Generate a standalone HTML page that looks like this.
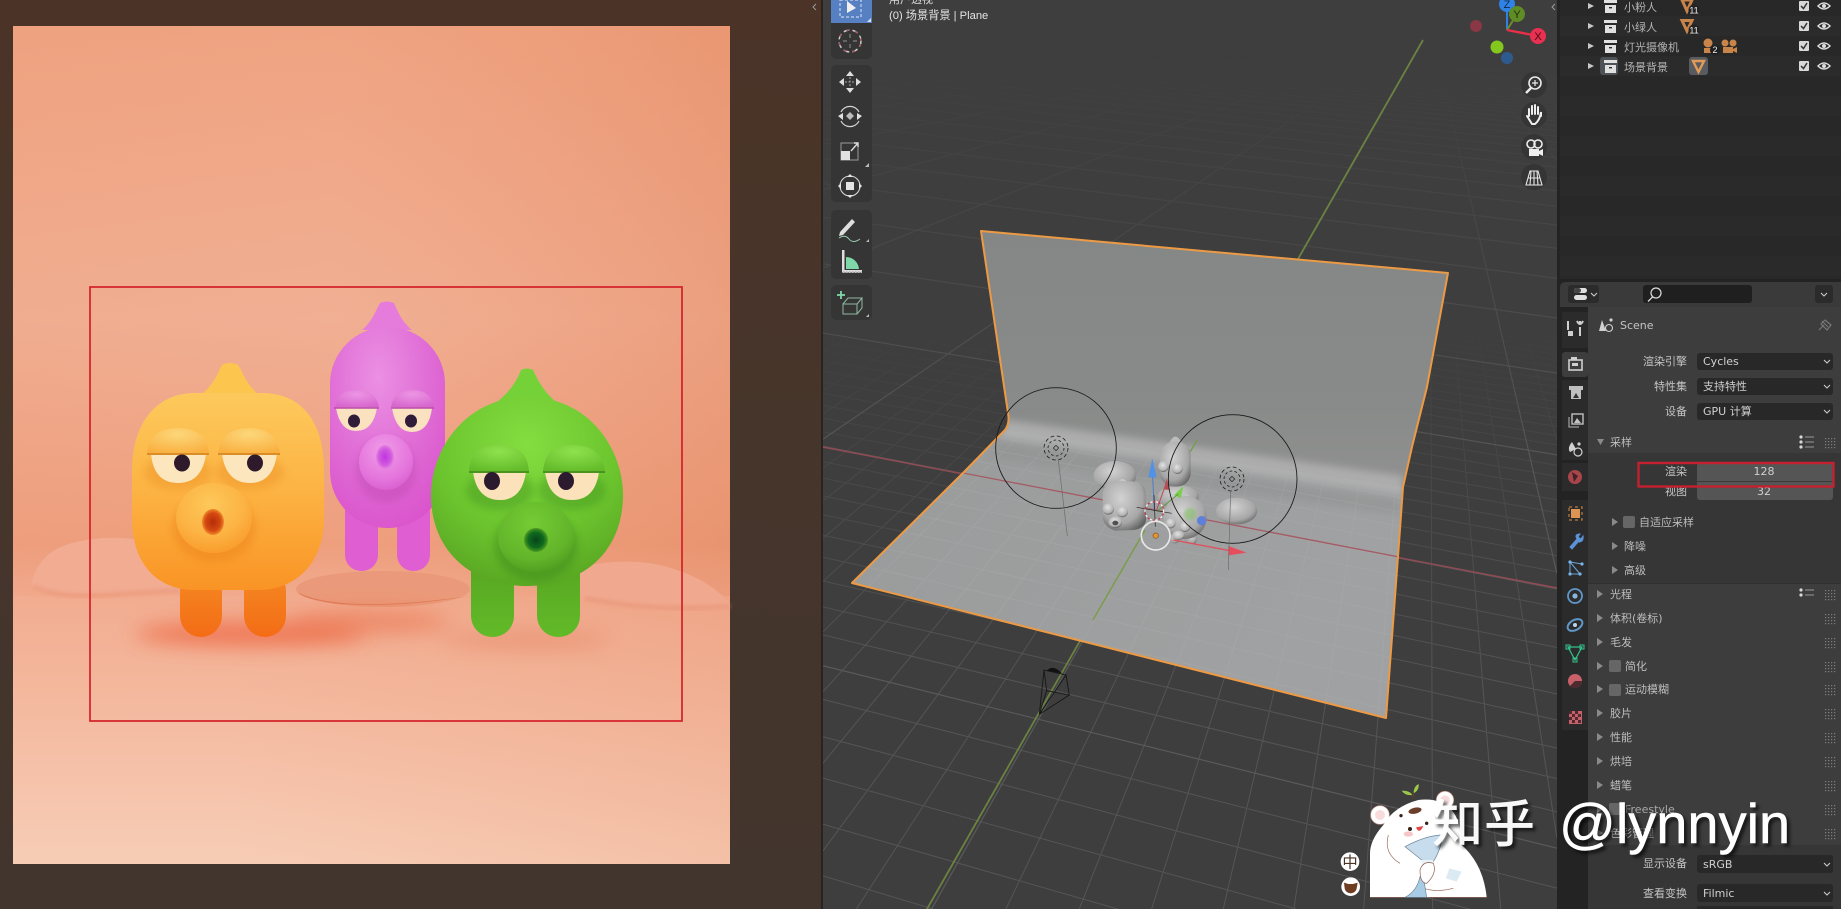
<!DOCTYPE html>
<html lang="zh">
<head>
<meta charset="utf-8">
<title>Blender</title>
<style>
html,body{margin:0;padding:0;background:#463429;width:1841px;height:909px;overflow:hidden}
svg{position:absolute;left:0;top:0;display:block;overflow:hidden}
text{font-family:"DejaVu Sans","Noto Sans CJK SC",sans-serif;font-size:11px;fill:#c4c4c4}
.r{text-anchor:end}
.v{fill:#d0d0d0}
.h{fill:#bdbdbd}
.o{fill:#b4b4b4;font-size:11px}
.l{font-family:"Liberation Sans","Noto Sans CJK SC",sans-serif}
</style>
</head>
<body>
<svg width="1841" height="909" viewBox="0 0 1841 909" xmlns="http://www.w3.org/2000/svg">
<defs>
<linearGradient id="pageBg" x1="0" y1="0" x2="0" y2="1"><stop offset="0" stop-color="#4b3327"/><stop offset=".5" stop-color="#46352b"/><stop offset="1" stop-color="#42352d"/></linearGradient>
<linearGradient id="bgV" x1="0" y1="0" x2="0" y2="1"><stop offset="0" stop-color="#efa381"/><stop offset=".35" stop-color="#f1af93"/><stop offset=".62" stop-color="#ee9f7e"/><stop offset=".69" stop-color="#f2ad91"/><stop offset="1" stop-color="#f7cdb6"/></linearGradient>
<linearGradient id="bgH" x1="0" y1="0" x2="1" y2="0"><stop offset="0" stop-color="#e88a62" stop-opacity=".06"/><stop offset=".45" stop-color="#e88a62" stop-opacity="0"/><stop offset="1" stop-color="#dd7a50" stop-opacity=".3"/></linearGradient>
<linearGradient id="bgH2" x1="0" y1="0" x2="1" y2="0"><stop offset=".3" stop-color="#e88a62" stop-opacity="0"/><stop offset="1" stop-color="#e07f58" stop-opacity=".16"/></linearGradient>
<linearGradient id="org" x1="0" y1="0" x2="0" y2="1"><stop offset="0" stop-color="#fdc95c"/><stop offset=".5" stop-color="#fcb343"/><stop offset="1" stop-color="#f99425"/></linearGradient>
<linearGradient id="orgL" x1="0" y1="0" x2="0" y2="1"><stop offset="0" stop-color="#f58a22"/><stop offset="1" stop-color="#f46c16"/></linearGradient>
<radialGradient id="orgM" cx=".45" cy=".3" r=".75"><stop offset="0" stop-color="#fdc85a"/><stop offset=".6" stop-color="#fcb343"/><stop offset="1" stop-color="#f8992a"/></radialGradient>
<radialGradient id="orgLid" cx=".5" cy=".25" r=".8"><stop offset="0" stop-color="#fdd77a"/><stop offset="1" stop-color="#f9b040"/></radialGradient>
<radialGradient id="pnk" cx=".42" cy=".25" r=".85"><stop offset="0" stop-color="#eb90e3"/><stop offset=".5" stop-color="#e06ed6"/><stop offset="1" stop-color="#d950ca"/></radialGradient>
<radialGradient id="pnkM" cx=".45" cy=".3" r=".75"><stop offset="0" stop-color="#f09be8"/><stop offset=".7" stop-color="#e474dc"/><stop offset="1" stop-color="#d75ccd"/></radialGradient>
<radialGradient id="pnkLid" cx=".5" cy=".25" r=".8"><stop offset="0" stop-color="#ec95e4"/><stop offset="1" stop-color="#d765cd"/></radialGradient>
<radialGradient id="grn" cx=".5" cy=".25" r=".85"><stop offset="0" stop-color="#84dd40"/><stop offset=".55" stop-color="#6cc52e"/><stop offset="1" stop-color="#559e20"/></radialGradient>
<radialGradient id="grnM" cx=".45" cy=".3" r=".75"><stop offset="0" stop-color="#74cc34"/><stop offset=".7" stop-color="#62b42a"/><stop offset="1" stop-color="#4f9a1f"/></radialGradient>
<radialGradient id="grnLid" cx=".5" cy=".25" r=".8"><stop offset="0" stop-color="#8ee24c"/><stop offset="1" stop-color="#63bb2a"/></radialGradient>
<linearGradient id="grnL" x1="0" y1="0" x2="0" y2="1"><stop offset="0" stop-color="#55a320"/><stop offset="1" stop-color="#62ba28"/></linearGradient>
<radialGradient id="holeO" cx=".5" cy=".5" r=".5"><stop offset="0" stop-color="#b52c08"/><stop offset=".7" stop-color="#d44a12"/><stop offset="1" stop-color="#ef8a2a"/></radialGradient>
<radialGradient id="holeP" cx=".5" cy=".5" r=".5"><stop offset="0" stop-color="#bf35e0"/><stop offset=".7" stop-color="#d25ae0"/><stop offset="1" stop-color="#e483de"/></radialGradient>
<radialGradient id="holeG" cx=".5" cy=".5" r=".5"><stop offset="0" stop-color="#07451a"/><stop offset=".65" stop-color="#0f6a1e"/><stop offset="1" stop-color="#4e9c22"/></radialGradient>
<filter id="b1" x="-30%" y="-30%" width="160%" height="160%"><feGaussianBlur stdDeviation="1"/></filter>
<filter id="b2" x="-30%" y="-30%" width="160%" height="160%"><feGaussianBlur stdDeviation="2"/></filter>
<filter id="b4" x="-30%" y="-30%" width="160%" height="160%"><feGaussianBlur stdDeviation="4"/></filter>
<filter id="b10" x="-40%" y="-120%" width="180%" height="340%"><feGaussianBlur stdDeviation="10"/></filter>
<clipPath id="vp"><rect x="823" y="0" width="734" height="909"/></clipPath>
<clipPath id="floorC"><path d="M852 583L963 473L1005 430L1403 487L1399 543L1386 718Z"/></clipPath>
<clipPath id="planeC"><path d="M981 231L1448 273L1427 387L1412 447L1403 487L1399 543L1386 718L852 583L963 473L1005 430Q1010 423 1008 413Z"/></clipPath>
<linearGradient id="wallG" x1="0" y1="231" x2="0" y2="480" gradientUnits="userSpaceOnUse"><stop offset="0" stop-color="#848786"/><stop offset=".72" stop-color="#898b8a"/><stop offset="1" stop-color="#8f908f"/></linearGradient>
<linearGradient id="floorG" x1="900" y1="450" x2="1250" y2="700" gradientUnits="userSpaceOnUse"><stop offset="0" stop-color="#9a9c9c"/><stop offset="1" stop-color="#a0a1a2"/></linearGradient>
<linearGradient id="fadeMaj" x1="0" y1="0" x2="0" y2="909" gradientUnits="userSpaceOnUse"><stop offset=".06" stop-color="#000"/><stop offset=".3" stop-color="#666"/><stop offset=".5" stop-color="#ddd"/><stop offset=".7" stop-color="#fff"/></linearGradient>
<linearGradient id="fadeMin" x1="0" y1="0" x2="0" y2="909" gradientUnits="userSpaceOnUse"><stop offset=".34" stop-color="#000"/><stop offset=".52" stop-color="#777"/><stop offset=".75" stop-color="#fff"/></linearGradient>
<mask id="mMaj" maskUnits="userSpaceOnUse" x="0" y="0" width="1841" height="909"><rect width="1841" height="909" fill="url(#fadeMaj)"/></mask>
<mask id="mMin" maskUnits="userSpaceOnUse" x="0" y="0" width="1841" height="909"><rect width="1841" height="909" fill="url(#fadeMin)"/></mask>
<radialGradient id="gy" cx=".42" cy=".35" r=".72"><stop offset="0" stop-color="#d2d2d2"/><stop offset=".7" stop-color="#a6a6a6"/><stop offset="1" stop-color="#626262"/></radialGradient>
<radialGradient id="gyE" cx=".45" cy=".35" r=".7"><stop offset="0" stop-color="#e2e2e2"/><stop offset=".7" stop-color="#b2b2b2"/><stop offset="1" stop-color="#444"/></radialGradient>
</defs>

<!-- left image editor -->
<rect x="0" y="0" width="821" height="909" fill="url(#pageBg)"/>
<rect x="13" y="26" width="717" height="838" fill="url(#bgV)"/>
<rect x="13" y="26" width="717" height="570" fill="url(#bgH)"/>
<rect x="13" y="596" width="717" height="268" fill="url(#bgH2)"/>
<g>
<!-- mounds -->
<path d="M31 585Q38 552 72 543Q105 534 140 540L200 588Q150 596 100 594Q36 596 31 585Z" fill="#f1ac92"/>
<path d="M33 586Q60 600 120 594L180 590" fill="none" stroke="#e88c6c" stroke-width="2" filter="url(#b2)"/>
<path d="M575 568Q620 557 660 565Q708 577 730 604V608Q680 611 620 606Q590 602 575 595Z" fill="#f0a98e"/>
<path d="M585 598Q650 612 730 606" fill="none" stroke="#e58a6b" stroke-width="2" filter="url(#b2)"/>
<ellipse cx="383" cy="589" rx="87" ry="18" fill="#ea9a7a"/>
<path d="M297 592Q340 614 470 596Q400 608 340 604Q305 600 297 592Z" fill="#df7c58"/>
<!-- contact shadows -->
<ellipse cx="250" cy="634" rx="115" ry="12" fill="#ec4f26" opacity=".6" filter="url(#b10)"/>
<ellipse cx="370" cy="622" rx="80" ry="12" fill="#e96a44" opacity=".5" filter="url(#b10)"/>
<ellipse cx="525" cy="640" rx="85" ry="8" fill="#e0704c" opacity=".4" filter="url(#b10)"/>
<!-- pink -->
<rect x="345" y="490" width="33" height="81" rx="16" fill="#df5fd3"/>
<rect x="397" y="490" width="33" height="81" rx="16" fill="#df5fd3"/>
<path d="M362 330C372 322 376 310 380 303Q387 300 394 303C398 312 402 322 412 330Z" fill="#e57cdc"/>
<rect x="330" y="327" width="115" height="201" rx="57" fill="url(#pnk)"/>
<ellipse cx="386" cy="470" rx="30" ry="32" fill="#b540a8" opacity=".35" filter="url(#b4)"/>
<path d="M335 407Q338 390 356 390Q376 390 379 407Z" fill="url(#pnkLid)"/>
<path d="M391 407Q394 390 412 390Q431 390 434 407Z" fill="url(#pnkLid)"/>
<path d="M336 408Q340 431 356 431Q373 431 377 408Z" fill="#fae2c0"/>
<path d="M392 408Q396 432 412 432Q429 432 432 408Z" fill="#fae2c0"/>
<path d="M334 408H379M391 408H434" stroke="#b74ea8" stroke-width="1.5" fill="none"/>
<ellipse cx="354" cy="421" rx="6" ry="6.5" fill="#2f1c38"/>
<ellipse cx="411" cy="421" rx="6" ry="6.5" fill="#2f1c38"/>
<ellipse cx="386" cy="462" rx="27" ry="28" fill="url(#pnkM)"/>
<ellipse cx="385" cy="457" rx="9" ry="12" fill="url(#holeP)"/>
<!-- green -->
<rect x="471" y="550" width="43" height="87" rx="21" fill="url(#grnL)"/>
<rect x="537" y="550" width="43" height="87" rx="21" fill="url(#grnL)"/>
<path d="M497 402C512 390 518 378 521 370Q527 367 533 370C537 378 542 390 556 402Z" fill="#74d238"/>
<path d="M527 397C590 397 623 450 623 495C623 550 585 586 527 586C470 586 431 550 431 495C431 450 465 397 527 397Z" fill="url(#grn)"/>
<ellipse cx="536" cy="545" rx="42" ry="36" fill="#2f7a12" opacity=".35" filter="url(#b4)"/>
<ellipse cx="500" cy="490" rx="34" ry="20" fill="#2f7a12" opacity=".3" filter="url(#b4)"/>
<ellipse cx="572" cy="490" rx="34" ry="20" fill="#2f7a12" opacity=".3" filter="url(#b4)"/>
<path d="M469 471Q470 445 499 445Q527 445 529 471Z" fill="url(#grnLid)"/>
<path d="M543 471Q545 445 572 445Q602 445 605 471Z" fill="url(#grnLid)"/>
<path d="M473 472Q477 500 500 500Q522 500 526 472Z" fill="#fbe2bb"/>
<path d="M545 472Q549 500 572 500Q595 500 599 472Z" fill="#fbe2bb"/>
<path d="M469 472H529M543 472H605" stroke="#4b9320" stroke-width="2" fill="none"/>
<ellipse cx="492" cy="481" rx="8" ry="9" fill="#2c1a2e"/>
<ellipse cx="566" cy="481" rx="8" ry="9" fill="#2c1a2e"/>
<ellipse cx="536" cy="537" rx="38" ry="35" fill="url(#grnM)"/>
<ellipse cx="536" cy="540" rx="12" ry="12" fill="url(#holeG)"/>
<!-- orange -->
<rect x="180" y="570" width="42" height="67" rx="21" fill="url(#orgL)"/>
<rect x="244" y="570" width="42" height="67" rx="21" fill="url(#orgL)"/>
<path d="M198 397C214 386 218 372 222 365Q230 361 238 365C243 372 246 386 262 397Z" fill="#fcc64e"/>
<path d="M195 393H262C304 393 324 425 324 470V518C324 565 294 590 258 590H195C158 590 132 565 132 518V470C132 425 155 393 195 393Z" fill="url(#org)"/>
<ellipse cx="214" cy="528" rx="42" ry="34" fill="#ea7d12" opacity=".4" filter="url(#b4)"/>
<ellipse cx="178" cy="472" rx="34" ry="18" fill="#e8891c" opacity=".35" filter="url(#b4)"/>
<ellipse cx="250" cy="472" rx="34" ry="18" fill="#e8891c" opacity=".35" filter="url(#b4)"/>
<path d="M147 453Q150 428 178 428Q206 428 209 453Z" fill="url(#orgLid)"/>
<path d="M218 453Q222 428 249 428Q276 428 280 453Z" fill="url(#orgLid)"/>
<path d="M151 454Q154 483 178 483Q202 483 206 454Z" fill="#fbe6bd"/>
<path d="M222 454Q226 483 250 483Q273 483 277 454Z" fill="#fbe6bd"/>
<path d="M147 454H209M218 454H280" stroke="#db8e28" stroke-width="2" fill="none"/>
<ellipse cx="182" cy="463" rx="8" ry="8.5" fill="#2e1a2a"/>
<ellipse cx="255" cy="463" rx="8" ry="8.5" fill="#2e1a2a"/>
<ellipse cx="214" cy="518" rx="38" ry="35" fill="url(#orgM)"/>
<ellipse cx="213" cy="522" rx="11" ry="13" fill="url(#holeO)"/>
<!-- red rectangle -->
<rect x="90" y="287" width="592" height="434" fill="none" stroke="#d32029" stroke-width="1.7"/>
</g>

<!-- viewport -->
<rect x="821" y="0" width="2" height="909" fill="#2a2420"/>
<rect x="823" y="0" width="734" height="909" fill="#3e3e3e"/>
<g clip-path="url(#vp)">
<g id="gridMin" mask="url(#mMin)" stroke="#555" stroke-width="1" fill="none"></g>
<g id="gridMaj" mask="url(#mMaj)" stroke="#5a5a5a" stroke-width="1.2" fill="none"></g>
<line x1="823" y1="447" x2="1557" y2="588" stroke="#8c4b55" stroke-width="1.6"/>
<line x1="927" y1="909" x2="1423" y2="40" stroke="#6a8340" stroke-width="1.8"/>
<!-- plane -->
<path d="M981 231L1448 273L1427 387L1412 447L1403 487L1399 543L1386 718L852 583L963 473L1005 430Q1010 423 1008 413Z" fill="url(#wallG)"/>
<path d="M852 583L963 473L1005 430L1403 487L1399 543L1386 718Z" fill="url(#floorG)"/>
<g clip-path="url(#planeC)">
<path d="M1005 420L1403 476L1403 494L1000 438Z" fill="#b2b2b2" filter="url(#b4)" opacity=".85"/>
<path d="M1000 442L1400 500L1400 515L990 458Z" fill="#8f9090" filter="url(#b4)" opacity=".55"/>
</g>
<g id="gridPlane" clip-path="url(#floorC)" stroke="#b4b5b6" stroke-opacity=".24" stroke-width="1" fill="none"></g>
<line x1="963" y1="473" x2="1399" y2="557" stroke="#a45c66" stroke-width="1.4"/>
<line x1="1093" y1="620" x2="1145" y2="530" stroke="#7b9c50" stroke-width="1.6"/>
<line x1="1190" y1="452" x2="1197" y2="440" stroke="#7b9c50" stroke-width="1.6"/>
<path d="M981 231L1448 273L1427 387L1412 447L1403 487L1399 543L1386 718L852 583L963 473L1005 430Q1010 423 1008 413Z" fill="none" stroke="#ed9a45" stroke-width="2" stroke-linejoin="round"/>

<!-- objects in plane -->
<g transform="translate(960 380) scale(.33333)">
<ellipse cx="465" cy="287" rx="64" ry="44" fill="url(#gy)"/>
<ellipse cx="830" cy="393" rx="62" ry="40" fill="url(#gy)"/>
<ellipse cx="655" cy="350" rx="62" ry="34" fill="url(#gy)"/>
<path d="M626 195Q645 145 668 195Z" fill="#bcbcbc"/>
<rect x="600" y="185" width="92" height="135" rx="42" fill="url(#gy)"/>
<circle cx="610" cy="260" r="16" fill="url(#gyE)"/>
<circle cx="652" cy="266" r="16" fill="url(#gyE)"/>
<rect x="632" y="460" width="26" height="30" rx="12" fill="url(#gy)"/>
<rect x="682" y="462" width="28" height="30" rx="12" fill="url(#gy)"/>
<path d="M466 318Q488 275 508 318Z" fill="#c8c8c8"/>
<path d="M428 345Q430 305 470 302L525 305Q558 310 558 350V420Q556 445 520 450L465 452Q430 440 428 410Z" fill="url(#gy)"/>
<circle cx="445" cy="387" r="17" fill="url(#gyE)"/>
<circle cx="487" cy="395" r="17" fill="url(#gyE)"/>
<ellipse cx="466" cy="427" rx="20" ry="17" fill="url(#gyE)"/>
<ellipse cx="466" cy="429" rx="9" ry="7" fill="#505050"/>
<path d="M656 365Q678 320 698 365Z" fill="#c8c8c8"/>
<circle cx="675" cy="412" r="65" fill="url(#gy)"/>
<circle cx="632" cy="430" r="15" fill="url(#gyE)"/>
<circle cx="675" cy="440" r="16" fill="url(#gyE)"/>
<ellipse cx="655" cy="466" rx="18" ry="14" fill="url(#gyE)"/>
<!-- gizmos -->
<circle cx="690" cy="402" r="18" fill="#7fc25e" opacity=".55" filter="url(#b4)"/>
<circle cx="725" cy="422" r="14" fill="#5e80d8"/>
<line x1="577" y1="270" x2="583" y2="390" stroke="#4d7ac8" stroke-width="3"/>
<path d="M577 236L590 292L565 292Z" fill="#4f92e8"/>
<line x1="620" y1="305" x2="590" y2="390" stroke="#b84c56" stroke-width="3"/>
<path d="M620 295L630 330L612 328Z" fill="#b84c56"/>
<path d="M670 318L642 345L662 355Z" fill="#79d04a"/>
<line x1="655" y1="342" x2="590" y2="395" stroke="#5f9a3c" stroke-width="3"/>
<line x1="640" y1="480" x2="810" y2="512" stroke="#e0505c" stroke-width="4"/>
<path d="M860 518L805 498L805 526Z" fill="#e84d5c"/>
<line x1="530" y1="382" x2="635" y2="400" stroke="#222" stroke-width="2"/>
<line x1="582" y1="345" x2="586" y2="440" stroke="#222" stroke-width="2"/>
<circle cx="583" cy="393" r="28" fill="none" stroke="#f0f0f0" stroke-width="4" stroke-dasharray="10 7"/>
<circle cx="583" cy="393" r="28" fill="none" stroke="#c8364a" stroke-width="4" stroke-dasharray="7 10" stroke-dashoffset="10"/>
<circle cx="587" cy="467" r="43" fill="none" stroke="#e8e8e8" stroke-width="5"/>
<circle cx="587" cy="467" r="8" fill="#e8952e" stroke="#7a5520" stroke-width="2"/>
<!-- lights -->
<circle cx="288" cy="204" r="181" fill="none" stroke="#1a1a1a" stroke-width="2.6"/>
<circle cx="818" cy="297" r="193" fill="none" stroke="#1a1a1a" stroke-width="2.6"/>
<circle cx="288" cy="204" r="36" fill="none" stroke="#1d1d1d" stroke-width="2.4" stroke-dasharray="11 8"/>
<circle cx="288" cy="204" r="24" fill="none" stroke="#1d1d1d" stroke-width="2.4" stroke-dasharray="8 7"/>
<path d="M288 196L296 204L288 212L280 204Z" fill="none" stroke="#222" stroke-width="2"/>
<circle cx="816" cy="297" r="36" fill="none" stroke="#1d1d1d" stroke-width="2.4" stroke-dasharray="11 8"/>
<circle cx="816" cy="297" r="24" fill="none" stroke="#1d1d1d" stroke-width="2.4" stroke-dasharray="8 7"/>
<path d="M816 289L824 297L816 305L808 297Z" fill="none" stroke="#222" stroke-width="2"/>
<line x1="295" y1="240" x2="322" y2="468" stroke="#6a6a6a" stroke-width="2"/>
<line x1="812" y1="330" x2="805" y2="570" stroke="#6a6a6a" stroke-width="2"/>
</g>

<!-- camera -->
<g transform="translate(820 620) scale(.33333)" fill="none" stroke="#141414" stroke-width="2.5">
<path d="M658 283L672 150L738 165L748 225L680 212L672 150M658 283L738 165M658 283L748 225M658 283L680 212"/>
<path d="M682 152Q698 135 722 158Z" fill="#111"/>
</g>

<!-- top text -->
<text class="l" x="889" y="3" style="font-size:11px;fill:#dcdcdc">用户透视</text>
<text class="l" x="889" y="19" style="font-size:11.2px;fill:#e4e4e4">(0) 场景背景 | Plane</text>

<!-- toolbar -->
<rect x="831" y="0" width="41" height="59" rx="5" fill="#353535"/>
<rect x="831" y="0" width="41" height="23" fill="#5680c2"/>
<rect x="840" y="0" width="21" height="17" fill="none" stroke="#c6d3ea" stroke-width="1.2" stroke-dasharray="3 2"/>
<path d="M847 1L847 13L856 8Z" fill="#f0f0f0"/>
<path d="M871 22L867 22L871 18Z" fill="#d8e2f2"/>
<circle cx="850" cy="41" r="11" fill="none" stroke="#cfcfcf" stroke-width="1.4" stroke-dasharray="6 3"/>
<circle cx="850" cy="41" r="11" fill="none" stroke="#a8565f" stroke-width="1.4" stroke-dasharray="3 6" stroke-dashoffset="6"/>
<path d="M850 34V38M850 44V48M843 41H847M853 41H857" stroke="#808080" stroke-width="1.2"/>

<rect x="831" y="65" width="41" height="137" rx="5" fill="#353535"/>
<!-- move -->
<path d="M850 71L854 76H846ZM850 93L854 88H846ZM839 82L844 78V86ZM861 82L856 78V86Z" fill="#dedede"/>
<path d="M850 77V87M845 82H855" stroke="#aaa" stroke-width="1" stroke-dasharray="2 1.5"/>
<!-- rotate -->
<path d="M841 112A10 10 0 0 1 859 112M859 121A10 10 0 0 1 841 121" fill="none" stroke="#d4d4d4" stroke-width="1.2"/>
<path d="M850 112L854 116L850 120L846 116Z" fill="#bdbdbd"/>
<path d="M838 116L843 113V120ZM862 116L857 113V120Z" fill="#e0e0e0"/>
<!-- scale -->
<rect x="841" y="143" width="17" height="17" fill="none" stroke="#9a9a9a" stroke-width="1"/>
<rect x="841" y="151" width="9" height="9" fill="#e2e2e2"/>
<path d="M851 151L858 143M854 143H858V147" fill="none" stroke="#dedede" stroke-width="1.4"/>
<path d="M869 167L865 167L869 163Z" fill="#bbb"/>
<!-- transform -->
<circle cx="850" cy="186" r="10" fill="none" stroke="#cfcfcf" stroke-width="1.1"/>
<rect x="846" y="182" width="8" height="8" fill="#e4e4e4"/>
<path d="M850 174L853 177H847ZM850 198L853 195H847ZM838 186L841 183V189ZM862 186L859 183V189Z" fill="#e4e4e4"/>

<rect x="831" y="210" width="41" height="69" rx="5" fill="#353535"/>
<!-- annotate -->
<path d="M840 232L852 219L855 222L843 235L839 236Z" fill="#dedede"/>
<path d="M839 238Q845 234 849 239T860 239" fill="none" stroke="#9cceb4" stroke-width="1"/>
<path d="M869 242L866 242L869 239Z" fill="#bbb"/>
<!-- measure -->
<path d="M842 250H844.5V270H862V272.5H842Z" fill="#dedede"/>
<path d="M846 269V257A13 13 0 0 1 859 269Z" fill="#7fd8a8"/>
<path d="M843 272H862" stroke="#bdbdbd" stroke-width="2" stroke-dasharray="1.5 1.5"/>

<rect x="831" y="285" width="41" height="35" rx="5" fill="#353535"/>
<!-- add cube -->
<path d="M841 291V299M837 295H845" stroke="#7fd8a8" stroke-width="1.8"/>
<path d="M843 304H857V314H843ZM843 304L848 298H862L857 304M862 298V308L857 314" fill="none" stroke="#8fb8a4" stroke-width="1"/>
<path d="M869 317L866 317L869 314Z" fill="#bbb"/>

<!-- gizmo -->
<circle cx="1476" cy="26" r="6" fill="#8a3746"/>
<circle cx="1497" cy="47" r="6.5" fill="#84c81e"/>
<circle cx="1507" cy="58" r="6" fill="#2f5a8e"/>
<line x1="1507" y1="30" x2="1507" y2="6" stroke="#2f83e0" stroke-width="2"/>
<line x1="1507" y1="30" x2="1517" y2="14" stroke="#6f8c2a" stroke-width="2"/>
<line x1="1507" y1="30" x2="1538" y2="36" stroke="#e83048" stroke-width="2.4"/>
<circle cx="1507" cy="4" r="8" fill="#2f83e6"/>
<circle cx="1517" cy="14" r="8" fill="#5f8c24"/>
<circle cx="1538" cy="36" r="8" fill="#e83050"/>
<text x="1507" y="8" text-anchor="middle" style="font-size:11px;fill:#0f2a4a" class="l">Z</text>
<text x="1517" y="18" text-anchor="middle" style="font-size:11px;fill:#1e3008" class="l">Y</text>
<text x="1538" y="40" text-anchor="middle" style="font-size:11px;fill:#4a0a14" class="l">X</text>

<!-- nav icons -->
<circle cx="1534" cy="85" r="13" fill="#353535"/>
<circle cx="1534" cy="115" r="13" fill="#353535"/>
<circle cx="1534" cy="147" r="13" fill="#353535"/>
<circle cx="1534" cy="177" r="13" fill="#353535"/>
<circle cx="1535" cy="83" r="6" fill="none" stroke="#eaeaea" stroke-width="1.6"/>
<path d="M1531 88L1526 93" stroke="#eaeaea" stroke-width="2.4"/>
<path d="M1535 80V86M1532 83H1538" stroke="#eaeaea" stroke-width="1.2"/>
<path d="M1529 116V109M1532 114V106M1535 114V105M1538 114V107M1541 116V112Q1540 120 1535 124H1532L1527 116" fill="none" stroke="#eeeeee" stroke-width="2" stroke-linecap="round"/>
<circle cx="1531" cy="144" r="4" fill="none" stroke="#eee" stroke-width="1.6"/>
<circle cx="1538" cy="144" r="4" fill="none" stroke="#eee" stroke-width="1.6"/>
<rect x="1529" y="149" width="10" height="7" fill="#eee"/>
<path d="M1539 151L1543 149V156L1539 154Z" fill="#eee"/>
<path d="M1530 171H1538L1542 185H1526ZM1534 171V185M1528 178H1540M1531 171L1530 185M1537 171L1538 185" fill="none" stroke="#e6e6e6" stroke-width="1.1"/>
<path d="M816 4L813 7L816 10" fill="none" stroke="#888" stroke-width="1"/>
<path d="M1555 4L1552 7L1555 10" fill="none" stroke="#999" stroke-width="1"/>
</g>
<path d="M816 4L813 7L816 10" fill="none" stroke="#999" stroke-width="1"/>

<!-- right column -->
<rect x="1557" y="0" width="284" height="909" fill="#232323"/>
<!-- outliner -->
<rect x="1560" y="0" width="281" height="279" fill="#282828"/>
<rect x="1560" y="16" width="281" height="20" fill="#2b2b2b"/>
<rect x="1560" y="56" width="281" height="20" fill="#2b2b2b"/>
<rect x="1560" y="96" width="281" height="20" fill="#2a2a2a"/>
<rect x="1560" y="136" width="281" height="20" fill="#2a2a2a"/>
<rect x="1560" y="176" width="281" height="20" fill="#2a2a2a"/>
<rect x="1560" y="216" width="281" height="20" fill="#2a2a2a"/>
<rect x="1560" y="256" width="281" height="20" fill="#2a2a2a"/>
<rect x="1600" y="57" width="18" height="18" rx="3" fill="#4d5256"/>
<g fill="#c8c8c8">
<path d="M1588 3L1594 6L1588 9ZM1588 23L1594 26L1588 29ZM1588 43L1594 46L1588 49ZM1588 63L1594 66L1588 69Z"/>
<g fill="#e0e0e0">
<path d="M1604 0H1617V3H1604ZM1605 5H1616V13H1605ZM1604 20H1617V23H1604ZM1605 25H1616V33H1605ZM1604 40H1617V43H1604ZM1605 45H1616V53H1605ZM1604 60H1617V63H1604ZM1605 65H1616V73H1605Z"/>
</g>
</g>
<g fill="#282828"><rect x="1609" y="7" width="3" height="1.4"/><rect x="1609" y="27" width="3" height="1.4"/><rect x="1609" y="47" width="3" height="1.4"/><rect x="1609" y="67" width="3" height="1.4"/></g>
<text class="o" x="1624" y="11">小粉人</text>
<text class="o" x="1624" y="31">小绿人</text>
<text class="o" x="1624" y="51">灯光摄像机</text>
<text class="o" x="1624" y="71">场景背景</text>
<!-- data icons -->
<path d="M1682 0H1692L1687 11Z" fill="none" stroke="#c9844a" stroke-width="3"/>
<path d="M1682 20.5H1692L1687 31Z" fill="none" stroke="#c9844a" stroke-width="3"/>
<circle cx="1694" cy="10" r="5.5" fill="#222"/><circle cx="1694" cy="30" r="5.5" fill="#222"/>
<text class="l" x="1694" y="13.5" text-anchor="middle" style="font-size:9px;fill:#eee">11</text>
<text class="l" x="1694" y="33.5" text-anchor="middle" style="font-size:9px;fill:#eee">11</text>
<circle cx="1708" cy="43" r="4.5" fill="#c9844a"/><path d="M1704 48H1712V53H1704Z" fill="#c9844a"/>
<circle cx="1715" cy="50" r="5" fill="#1e1e1e"/>
<text class="l" x="1715" y="53" text-anchor="middle" style="font-size:9px;fill:#eee">2</text>
<circle cx="1725" cy="43" r="3.5" fill="#c9844a"/><circle cx="1733" cy="43" r="3.5" fill="#c9844a"/>
<rect x="1723" y="47" width="10" height="6" fill="#c9844a"/><path d="M1733 49L1737 47V53L1733 51Z" fill="#c9844a"/>
<rect x="1689" y="57" width="19" height="18" rx="3" fill="#585c60"/>
<path d="M1693 61H1704L1698.5 72Z" fill="none" stroke="#e39a58" stroke-width="2.4"/>
<!-- checks/eyes -->
<g>
<rect x="1799" y="1" width="10" height="10" rx="1" fill="#d8d8d8"/><rect x="1799" y="21" width="10" height="10" rx="1" fill="#d8d8d8"/><rect x="1799" y="41" width="10" height="10" rx="1" fill="#d8d8d8"/><rect x="1799" y="61" width="10" height="10" rx="1" fill="#d8d8d8"/>
<path d="M1801 6L1803.5 8.5L1807 3M1801 26L1803.5 28.5L1807 23M1801 46L1803.5 48.5L1807 43M1801 66L1803.5 68.5L1807 63" fill="none" stroke="#333" stroke-width="1.5"/>
<path d="M1818 6Q1824 0 1830 6Q1824 12 1818 6ZM1818 26Q1824 20 1830 26Q1824 32 1818 26ZM1818 46Q1824 40 1830 46Q1824 52 1818 46ZM1818 66Q1824 60 1830 66Q1824 72 1818 66Z" fill="none" stroke="#dcdcdc" stroke-width="1.5"/>
<circle cx="1824" cy="6" r="2" fill="#dcdcdc"/><circle cx="1824" cy="26" r="2" fill="#dcdcdc"/><circle cx="1824" cy="46" r="2" fill="#dcdcdc"/><circle cx="1824" cy="66" r="2" fill="#dcdcdc"/>
</g>

<!-- properties header -->
<path d="M1560 288Q1560 282 1566 282H1841V307H1560Z" fill="#3a3a3a"/>
<rect x="1568" y="285" width="31" height="18" rx="3" fill="#2b2b2b"/>
<rect x="1574" y="288" width="13" height="5" rx="2.5" fill="#e0e0e0"/><rect x="1574" y="295" width="13" height="5" rx="2.5" fill="#e0e0e0"/>
<rect x="1574" y="288" width="7" height="5" rx="2.5" fill="#444"/>
<path d="M1591 293L1594 296L1597 293" fill="none" stroke="#ccc" stroke-width="1.1"/>
<rect x="1643" y="285" width="109" height="18" rx="3" fill="#1f1f1f"/>
<circle cx="1656" cy="293" r="5" fill="none" stroke="#ddd" stroke-width="1.2"/>
<path d="M1652.5 297L1648 301.5" stroke="#ddd" stroke-width="1.3"/>
<rect x="1815" y="285" width="18" height="18" rx="3" fill="#2b2b2b"/>
<path d="M1821 293L1824 296L1827 293" fill="none" stroke="#ccc" stroke-width="1.1"/>

<!-- main panel -->
<rect x="1588" y="307" width="253" height="602" fill="#3d3d3d"/>
<rect x="1588" y="453" width="253" height="130" fill="#363636"/>
<rect x="1588" y="583" width="253" height="1" fill="#2f2f2f"/>
<rect x="1588" y="845" width="253" height="64" fill="#363636"/>
<!-- tabs -->
<rect x="1560" y="307" width="28" height="602" fill="#232323"/>
<rect x="1562" y="312" width="26" height="36" fill="#2b2b2b"/>
<rect x="1562" y="352" width="26" height="25" rx="3" fill="#3d3d3d"/>
<rect x="1562" y="380" width="26" height="80" fill="#2b2b2b"/>
<rect x="1562" y="463" width="26" height="28" fill="#2b2b2b"/>
<rect x="1562" y="500" width="26" height="230" fill="#2b2b2b"/>
<!-- tab icons -->
<path d="M1568 321V330M1580 321L1580 325M1577 321Q1580 327 1583 321M1580 327V336" fill="none" stroke="#cfcfcf" stroke-width="2"/>
<rect x="1568" y="331" width="5" height="5" fill="#cfcfcf"/>
<rect x="1569" y="360" width="13" height="10" fill="none" stroke="#cfcfcf" stroke-width="1.6"/>
<rect x="1571" y="357" width="6" height="3" fill="#cfcfcf"/><rect x="1572" y="363" width="6" height="3" fill="#cfcfcf"/>
<rect x="1569" y="386" width="14" height="4" fill="#c0c0c0"/><rect x="1571" y="390" width="10" height="9" fill="#c0c0c0"/><path d="M1573 398L1576 393L1579 398Z" fill="#333"/>
<rect x="1572" y="414" width="11" height="10" fill="none" stroke="#c0c0c0" stroke-width="1.4"/><path d="M1569 417V427H1579" fill="none" stroke="#999" stroke-width="1.3"/><path d="M1574 423L1577 418L1581 423Z" fill="#c0c0c0"/>
<path d="M1572 442L1576 449L1570 452Q1567 448 1572 442Z" fill="#d0d0d0"/><circle cx="1579" cy="444" r="1.6" fill="#d0d0d0"/><circle cx="1578" cy="452" r="4" fill="none" stroke="#d0d0d0" stroke-width="1.2"/>
<circle cx="1575" cy="477" r="7" fill="#a8454a"/><path d="M1572 472L1578 476L1574 482Z" fill="#3f2226"/>
<rect x="1569" y="507" width="13" height="13" fill="none" stroke="#b87e46" stroke-width="1.2" stroke-dasharray="3 3"/><rect x="1571" y="509" width="9" height="9" fill="#dc9552"/>
<path d="M1570 547L1577 539Q1574 534 1580 534L1578 537L1581 539L1583 536Q1584 542 1578 542L1572 549Z" fill="#5a93d8" stroke="#5a93d8"/>
<path d="M1570 562L1580 574M1570 562V574H1580M1570 562L1582 564" fill="none" stroke="#6aa4d8" stroke-width="1"/><circle cx="1570" cy="562" r="1.6" fill="#7ab4e8"/><circle cx="1582" cy="564" r="1.6" fill="#7ab4e8"/><circle cx="1580" cy="574" r="1.6" fill="#7ab4e8"/><circle cx="1570" cy="574" r="1.6" fill="#7ab4e8"/>
<circle cx="1575" cy="596" r="7" fill="none" stroke="#5f97c8" stroke-width="1.8"/><circle cx="1575" cy="596" r="2.6" fill="#88b4da"/>
<ellipse cx="1575" cy="625" rx="8" ry="5" fill="none" stroke="#5f97c8" stroke-width="2" transform="rotate(-30 1575 625)"/><circle cx="1575" cy="625" r="2" fill="#bfd5ea"/>
<path d="M1568 647H1582L1575 660Z" fill="none" stroke="#34c48c" stroke-width="1.2"/><rect x="1566" y="645" width="4" height="4" fill="none" stroke="#34c48c"/><rect x="1580" y="645" width="4" height="4" fill="none" stroke="#34c48c"/><rect x="1573" y="658" width="4" height="4" fill="none" stroke="#34c48c"/>
<circle cx="1575" cy="681" r="7" fill="#c8606a"/><path d="M1575 681H1582A7 7 0 0 1 1570 686Z" fill="#4c2a2e"/>
<rect x="1569" y="711" width="13" height="13" fill="#c8606a"/>
<path d="M1569 711h3v3h-3zM1575 711h3v3h-3zM1572 714h3v3h-3zM1578 714h3v3h-3zM1569 717h3v3h-3zM1575 717h3v3h-3zM1572 720h3v3h-3zM1578 720h3v3h-3z" fill="#4f2a30"/>

<!-- Scene -->
<path d="M1602 320L1606 331L1599 331Z" fill="#d0d0d0"/><circle cx="1611" cy="320" r="1.6" fill="#d0d0d0"/><circle cx="1609" cy="328" r="3.5" fill="none" stroke="#d0d0d0" stroke-width="1.1"/>
<text x="1620" y="329" style="font-size:11px">Scene</text>
<path d="M1822 321L1828 327M1819 330L1824 325M1825 320L1831 325L1827 330L1821 324Z" fill="none" stroke="#777" stroke-width="1.2"/>

<text class="r" x="1687" y="365">渲染引擎</text>
<text class="r" x="1687" y="390">特性集</text>
<text class="r" x="1687" y="415">设备</text>
<rect x="1697" y="353" width="136" height="17" rx="3" fill="#282828"/>
<rect x="1697" y="378" width="136" height="17" rx="3" fill="#282828"/>
<rect x="1697" y="403" width="136" height="17" rx="3" fill="#282828"/>
<text class="v" x="1703" y="365">Cycles</text>
<text class="v" x="1703" y="390">支持特性</text>
<text class="v" x="1703" y="415">GPU 计算</text>
<path d="M1824 360L1827 363L1830 360M1824 385L1827 388L1830 385M1824 410L1827 413L1830 410" fill="none" stroke="#ccc" stroke-width="1.1"/>

<path d="M1597 439L1604 439L1600.5 445Z" fill="#8a8a8a"/>
<text class="h" x="1610" y="446">采样</text>
<!-- list icons -->
<g fill="#d8d8d8"><circle cx="1801" cy="437" r="1.6"/><circle cx="1801" cy="442" r="1.6"/><circle cx="1801" cy="447" r="1.6"/><circle cx="1801" cy="590" r="1.6"/><circle cx="1801" cy="595" r="1.6"/></g>
<path d="M1805 437H1814M1805 442H1814M1805 447H1814M1805 590H1814M1805 595H1814" stroke="#999" stroke-width="1"/>
<!-- sampling fields -->
<rect x="1697" y="463" width="136" height="37" rx="3" fill="#555"/>
<rect x="1697" y="481" width="136" height="1" fill="#3a3a3a"/>
<text class="r" x="1687" y="475">渲染</text>
<text class="r" x="1687" y="495">视图</text>
<text class="v" x="1764" y="475" text-anchor="middle">128</text>
<text class="v" x="1764" y="495" text-anchor="middle">32</text>
<rect x="1638.5" y="463" width="195" height="23.5" fill="none" stroke="#c4202f" stroke-width="2.4"/>
<!-- sub rows -->
<path d="M1612 518L1618 522L1612 526ZM1612 542L1618 546L1612 550ZM1612 566L1618 570L1612 574Z" fill="#8a8a8a"/>
<rect x="1623" y="516" width="12" height="12" rx="2" fill="#666"/>
<text class="h" x="1639" y="526">自适应采样</text>
<text class="h" x="1624" y="550">降噪</text>
<text class="h" x="1624" y="574">高级</text>
<!-- closed panels -->
<g fill="#8a8a8a">
<path d="M1597 590L1603 594L1597 598ZM1597 614L1603 618L1597 622ZM1597 638L1603 642L1597 646ZM1597 662L1603 666L1597 670ZM1597 685L1603 689L1597 693ZM1597 709L1603 713L1597 717ZM1597 733L1603 737L1597 741ZM1597 757L1603 761L1597 765ZM1597 781L1603 785L1597 789ZM1597 805L1603 809L1597 813ZM1597 829L1603 833L1597 837Z"/>
</g>
<text class="h" x="1610" y="598">光程</text>
<text class="h" x="1610" y="622">体积(卷标)</text>
<text class="h" x="1610" y="646">毛发</text>
<rect x="1609" y="660" width="12" height="12" rx="2" fill="#666"/>
<text class="h" x="1625" y="670">简化</text>
<rect x="1609" y="684" width="12" height="12" rx="2" fill="#666"/>
<text class="h" x="1625" y="693">运动模糊</text>
<text class="h" x="1610" y="717">胶片</text>
<text class="h" x="1610" y="741">性能</text>
<text class="h" x="1610" y="765">烘培</text>
<text class="h" x="1610" y="789">蜡笔</text>
<rect x="1609" y="803" width="12" height="12" rx="2" fill="#666"/>
<text class="h" x="1625" y="813" style="fill:#a8a8a8">Freestyle</text>
<text class="h" x="1610" y="837">色彩管理</text>
<!-- drag dots -->
<g id="dots" fill="#7e7e7e"></g>
<!-- colour management -->
<text class="r" x="1687" y="867">显示设备</text>
<text class="r" x="1687" y="897">查看变换</text>
<rect x="1697" y="855" width="136" height="18" rx="3" fill="#282828"/>
<rect x="1697" y="884" width="136" height="18" rx="3" fill="#282828"/>
<rect x="1697" y="906" width="136" height="3" fill="#282828"/>
<text class="v" x="1703" y="868">sRGB</text>
<text class="v" x="1703" y="897">Filmic</text>
<path d="M1824 863L1827 866L1830 863M1824 892L1827 895L1830 892" fill="none" stroke="#ccc" stroke-width="1.1"/>

<!-- sticker -->
<g transform="translate(1320 760) scale(.33333)">
<circle cx="90" cy="305" r="28" fill="#fff"/>
<text x="90" y="322" text-anchor="middle" style="font-size:46px;fill:#4a3326;font-family:'Noto Sans CJK SC',sans-serif">中</text>
<circle cx="92" cy="380" r="28" fill="#fff"/>
<path d="M72 368L85 372H99L113 368L110 385Q108 398 92 400Q76 398 74 385Z" fill="#6e3d22"/>
<circle cx="180" cy="165" r="28" fill="#fff" stroke="#c89a8a" stroke-width="2"/><circle cx="180" cy="165" r="15" fill="#f8dcdc"/>
<circle cx="375" cy="120" r="26" fill="#fff" stroke="#c89a8a" stroke-width="2"/><circle cx="375" cy="120" r="14" fill="#f8dcdc"/>
<path d="M150 412V280Q150 240 190 195Q220 140 295 120Q360 112 395 150Q425 185 420 250Q490 310 500 412Z" fill="#fff"/>
<path d="M205 225Q190 280 240 310M150 412H500M300 380Q340 400 400 385" fill="none" stroke="#9a6a5a" stroke-width="2"/>
<path d="M255 260Q320 225 370 225Q355 290 335 310L305 300Z" fill="#c7dcec" stroke="#6a8498" stroke-width="2"/>
<path d="M310 350L320 412H255Q290 395 300 350Z" fill="#a8cce6" stroke="#6a8498" stroke-width="2"/>
<path d="M305 300L340 300L335 350L305 350Z" fill="#e8f2f8"/>
<path d="M300 330Q310 300 340 310Q352 340 320 370Q300 370 300 330Z" fill="#fff" stroke="#8a5a4a" stroke-width="2"/>
<ellipse cx="285" cy="152" rx="20" ry="9" fill="#6b3e2c" transform="rotate(-12 285 152)"/>
<circle cx="243" cy="167" r="5" fill="#3a2018"/>
<circle cx="270" cy="207" r="6" fill="#3a2018"/><circle cx="320" cy="190" r="5" fill="#3a2018"/>
<ellipse cx="265" cy="222" rx="14" ry="8" fill="#f6c6c6"/>
<path d="M288 202Q298 225 310 198Z" fill="#e04848"/>
<path d="M277 105Q270 92 245 92Q255 108 277 105ZM280 100Q282 78 296 72Q298 92 280 100Z" fill="#9cc84a"/>
<path d="M280 115V96" stroke="#6a3e22" stroke-width="3"/>
<path d="M388 325L425 335L410 365L378 355Z" fill="#dceaf4"/>
</g>

<!-- watermark -->
<g style="filter:drop-shadow(3px 3px 1.5px rgba(0,0,0,.62))">
<text x="1432" y="842" style="font-family:'Noto Sans CJK SC',sans-serif;font-size:51px;fill:#fff;font-weight:500;letter-spacing:1px;opacity:.97">知乎</text>
<text class="l" x="1559" y="843" style="font-size:56px;fill:#fff;stroke:#fff;stroke-width:.5px">@lynnyin</text>
</g>
</svg>
<script>
(function(){
var R=[-3200,-335],G=[1430,25],O=[1156,511];
var X0=823,X1=1557,Y0=0,Y1=909;
function P(s,t){var d=1+s+t;return [(O[0]+s*R[0]+t*G[0])/d,(O[1]+s*R[1]+t*G[1])/d];}
function L(a,b){
 var dx=b[0]-a[0],dy=b[1]-a[1],u0=0,u1=1;
 var ps=[-dx,dx,-dy,dy],qs=[a[0]-X0,X1-a[0],a[1]-Y0,Y1-a[1]];
 for(var k=0;k<4;k++){
  if(ps[k]===0){if(qs[k]<0)return '';continue;}
  var r=qs[k]/ps[k];
  if(ps[k]<0){if(r>u1)return '';if(r>u0)u0=r;}
  else{if(r<u0)return '';if(r<u1)u1=r;}
 }
 return 'M'+(a[0]+u0*dx).toFixed(1)+' '+(a[1]+u0*dy).toFixed(1)+'L'+(a[0]+u1*dx).toFixed(1)+' '+(a[1]+u1*dy).toFixed(1);
}
var ds=.0085,dt=.03,maj='',min='',pl='';
var i,s,t,p,tmin,smin;
for(i=-70;i<=70;i++){
 s=i*ds;tmin=Math.max(-.9,-.95-s);
 p=L(P(s,tmin),P(s,i%10===0?12:3));
 if(i%10===0){maj+=p;}else{min+=p;}
 pl+=p;
}
for(i=-30;i<=400;i++){
 t=i*dt;
 if(i%10!==0&&i>100)continue;
 smin=Math.max(-.7,-.95-t);
 p=L(P(smin,t),P(.7,t));
 if(i%10===0){maj+=p;}else{min+=p;}
 if(i<=60)pl+=p;
}
function add(id,d){var e=document.createElementNS('http://www.w3.org/2000/svg','path');e.setAttribute('d',d);document.getElementById(id).appendChild(e);}
add('gridMaj',maj);add('gridMin',min);add('gridPlane',pl);
var ys=[442,594,618,642,666,689,713,737,761,785,809,833],g=document.getElementById('dots');
ys.forEach(function(y){for(var a=0;a<4;a++)for(var b=0;b<4;b++){var c=document.createElementNS('http://www.w3.org/2000/svg','rect');c.setAttribute('x',1825+a*3);c.setAttribute('y',y-4+b*3);c.setAttribute('width',1.2);c.setAttribute('height',1.2);g.appendChild(c);}});
})();
</script>
</body>
</html>
